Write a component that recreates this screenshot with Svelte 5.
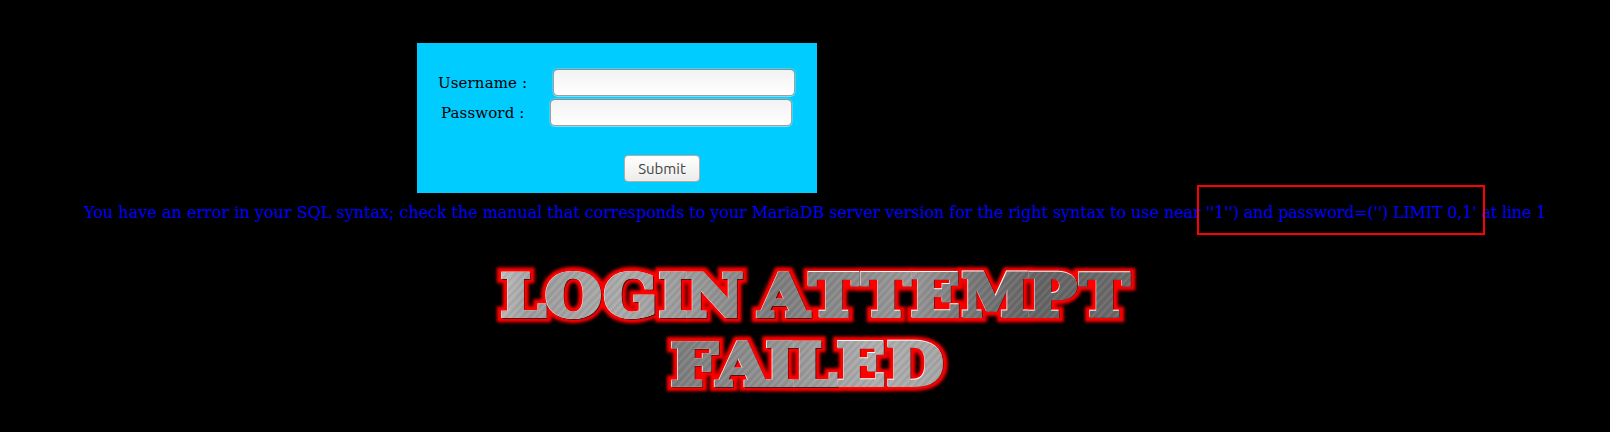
<script>
  const context = document.createElement('canvas').getContext('2d');
  context.font = 'bold 58px "DejaVu Serif"';

  // Each entry: character, left ink edge, right ink edge, baseline.
  const letters = [
    ['L', 501, 547, 316], ['O', 545.5, 602, 316], ['G', 604, 654.5, 316], ['I', 659, 687, 316], ['N', 686, 743, 316],
    ['A', 756, 812, 316], ['T', 807.5, 860, 315.5], ['T', 860, 912, 315.5], ['E', 911, 959.5, 315.5], ['M', 962, 1029, 315.5],
    ['P', 1028, 1078, 315.5], ['T', 1078, 1131, 315.5],
    ['F', 671, 719.5, 385], ['A', 714, 771, 385], ['I', 766, 794, 385], ['L', 793, 838, 385], ['E', 837, 885, 384.5], ['D', 887, 943, 384.5]
  ].map(([char, left, right, y]) => {
    const m = context.measureText(char);
    const sx = (right - left - 4) / (m.actualBoundingBoxRight + m.actualBoundingBoxLeft);
    return { char, y: y - 240, sx, x: left + 2 + m.actualBoundingBoxLeft * sx };
  });
</script>

<main>
  <form onsubmit={(e) => e.preventDefault()}>
    <div class="row first"><label for="user">Username :</label><input id="user" type="text" /></div>
    <div class="row second"><label for="pass">Password :</label><input id="pass" type="password" /></div>
    <button type="submit">Submit</button>
  </form>
  <p><span class="a">You have an error in your</span> <span>SQL syntax;</span> <span class="b">check the manual that corresponds to your MariaDB server version for the right syntax to use near</span> <span class="c">''1'') and password=('') LIMIT 0,1' at line 1</span><i class="mark"></i></p>
  <svg width="1610" height="192" viewBox="0 0 1610 192">
    <defs>
      <linearGradient id="metal" gradientUnits="userSpaceOnUse" x1="495" y1="20" x2="1130" y2="150">
        <stop offset="0" stop-color="#c6c6c6" /><stop offset=".07" stop-color="#9c9c9c" /><stop offset=".2" stop-color="#aaa" />
        <stop offset=".33" stop-color="#959595" /><stop offset=".43" stop-color="#7c7c7c" /><stop offset=".55" stop-color="#8c8c8c" />
        <stop offset=".64" stop-color="#989898" /><stop offset=".71" stop-color="#7c7c7c" /><stop offset=".83" stop-color="#646464" /><stop offset="1" stop-color="#6c6c6c" />
      </linearGradient>
      <linearGradient id="lower" x1="0" x2="1" y1="0" y2="0">
        <stop offset="0" stop-color="#787878" /><stop offset=".4" stop-color="#929292" /><stop offset=".75" stop-color="#aeaeae" /><stop offset="1" stop-color="#a4a4a4" />
      </linearGradient>
      <pattern id="brush" width="17" height="40" patternUnits="userSpaceOnUse" patternTransform="rotate(43)">
        <path d="M1 0V40M6 0V40M12 0V40" stroke="#fff" stroke-opacity=".13" />
        <path d="M3 0V40M9 0V40M15 0V40" stroke="#000" stroke-opacity=".1" />
      </pattern>
      <filter id="soft" x="-5%" y="-20%" width="110%" height="140%"><feGaussianBlur stdDeviation="1.7" /></filter>
      <mask id="shape" maskUnits="userSpaceOnUse" x="480" y="0" width="680" height="192"><use href="#letters" class="cut" /></mask>
    </defs>
    <g filter="url(#soft)"><use href="#letters" class="glow" /></g>
    <use href="#letters" class="shade" x="0.8" y="0.8" />
    <g class="light" transform="translate(-0.6 -0.4)">
      <g id="letters">
        {#each letters as l}
          <text transform="translate({l.x} {l.y}) scale({l.sx} 1)">{l.char}</text>
        {/each}
      </g>
    </g>
    <g mask="url(#shape)">
      <rect x="480" width="680" height="88" fill="url(#metal)" />
      <rect x="660" y="88" width="290" height="104" fill="url(#lower)" />
      <rect x="480" width="680" height="192" fill="url(#brush)" />
    </g>
  </svg>
</main>

<style>
  :global(body) { margin: 0; background: #000; }
  main { display: flow-root; width: 1610px; height: 432px; overflow: hidden; background: #000; font-family: "DejaVu Serif", serif; }
  form { box-sizing: border-box; width: 400px; height: 150px; margin: 43px 0 0 417px; padding-top: 26px; background: #0cf; }
  .row { display: flex; align-items: center; height: 27px; margin-bottom: 3px; font-size: 15px; color: #000; }
  .first { padding-left: 21px; }
  .second { padding-left: 24px; }
  label { width: 115px; letter-spacing: .12px; white-space: nowrap; }
  .second label { width: 109px; }
  input { box-sizing: border-box; width: 242px; height: 27px; margin: 0; padding: 0 6px; border: 1px solid #a49d98; border-top-color: #8d8d8d; border-radius: 5px; background: linear-gradient(#f2f2f2, #fff); box-shadow: 0 1px 0 #7bdff9, 0 0 1px 1px #7bdff980; outline: 0; }
  button { display: block; box-sizing: border-box; width: 76px; height: 27px; margin: 29px 0 0 207px; padding: 0; border: 1px solid #b5aca6; border-radius: 4px; background: linear-gradient(#fff, #ececeb); color: #444; font: 15px Ubuntu, "Open Sans", sans-serif; }
  p { position: relative; height: 19px; margin: 10px 0 18px 84px; color: #00f; font-size: 16px; line-height: 19px; white-space: nowrap; }
  .a { letter-spacing: .03px; }
  .b { letter-spacing: -.06px; }
  .c { letter-spacing: -.17px; }
  .mark { position: absolute; left: 1113px; top: -18px; box-sizing: border-box; width: 288px; height: 50px; border: 2px solid #f00; }
  svg { display: block; }
  text { font: bold 58px "DejaVu Serif", serif; vector-effect: non-scaling-stroke; }
  use, g { stroke-linejoin: miter; stroke-miterlimit: 2; }
  .glow { fill: #f00; stroke: #f00; stroke-width: 13px; }
  .shade { fill: #511; stroke: #511; stroke-width: 4px; }
  .light { fill: #fff; stroke: #fff; stroke-width: 4px; }
  .cut { fill: #fff; stroke: #fff; stroke-width: 4px; }
</style>
